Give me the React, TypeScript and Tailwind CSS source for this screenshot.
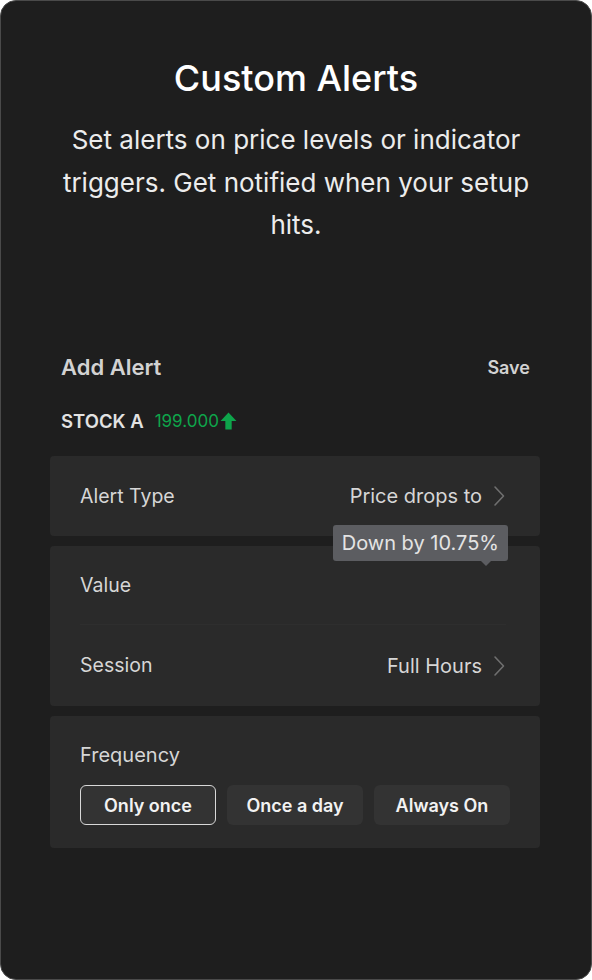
import React from 'react'

const font = { fontFamily: 'Inter, "Noto Sans", sans-serif' }

const Chevron: React.FC = () => (
    <svg width="14" height="22" viewBox="0 0 14 22" fill="none" className="ml-[10px]">
        <path d="M3 2l8.5 9L3 20" stroke="#6f6f6f" strokeWidth="1.6" strokeLinecap="round" strokeLinejoin="round" />
    </svg>
)

const frequencies = ['Only once', 'Once a day', 'Always On']

export default function App() {
    return (
        <div className="bg-white w-[592px] h-[980px]" style={font}>
            <div className="w-[592px] h-[980px] bg-[#1e1e1e] border border-[#4a4a4a] rounded-[16px] overflow-hidden flex flex-col">
                {/* Heading */}
                <div className="pt-[55px] px-[40px] text-center">
                    <h1 className="text-[36px] leading-[44px] font-medium text-white">Custom Alerts</h1>
                    <p className="mt-[19px] text-[26px] leading-[42.5px] text-[#ececec]">
                        Set alerts on price levels or indicator triggers. Get notified when your setup hits.
                    </p>
                </div>

                {/* Add alert form */}
                <div className="mt-[104px] px-[60px] flex justify-between items-center">
                    <span className="text-[22px] font-semibold text-[#d2d2d2]">Add Alert</span>
                    <span className="text-[18px] font-semibold text-[#d2d2d2] mr-[1px]">Save</span>
                </div>
                <div className="mt-[24px] px-[60px] flex items-center">
                    <span className="text-[18.5px] font-semibold text-[#e2e2e2]">STOCK A</span>
                    <span className="ml-[11px] text-[17px] text-[#0ea54b]">199.000</span>
                    <svg width="17" height="18" viewBox="0 0 16 17" className="ml-[1px]">
                        <path d="M8 0.5L15.5 8.5H11V16.5H5V8.5H0.5Z" fill="#0ea54b" />
                    </svg>
                </div>

                <div className="mt-[21px] ml-[49px] mr-[51px] flex flex-col gap-[10px]">
                    <div className="relative h-[80px] bg-[#2a2a2a] rounded-[4px] pl-[30px] pr-[34px] flex items-center justify-between">
                        <span className="text-[19.5px] text-[#d6d6d6]">Alert Type</span>
                        <span className="flex items-center text-[20px] text-[#d6d6d6]">
                            Price drops to
                            <Chevron />
                        </span>
                        <div className="absolute z-10 top-[69px] right-[32px] bg-[#5c5d61] rounded-[3px] h-[36px] px-[9px] flex items-center text-[20px] text-[#e4e4e4]">
                            Down by 10.75%
                            <span className="absolute -bottom-[5px] right-[17px] w-0 h-0 border-l-[5px] border-r-[5px] border-t-[5px] border-l-transparent border-r-transparent border-t-[#5c5d61]" />
                        </div>
                    </div>

                    <div className="bg-[#2a2a2a] rounded-[4px] pl-[30px] pr-[34px]">
                        <div className="h-[79px] flex items-center border-b border-[#2e2e2e]">
                            <span className="text-[19.5px] text-[#d6d6d6]">Value</span>
                        </div>
                        <div className="h-[81px] flex items-center justify-between">
                            <span className="text-[19.5px] text-[#d6d6d6]">Session</span>
                            <span className="flex items-center text-[20px] text-[#d6d6d6]">
                                Full Hours
                                <Chevron />
                            </span>
                        </div>
                    </div>

                    <div className="bg-[#2a2a2a] rounded-[4px] px-[30px] pt-[26px] pb-[23px]">
                        <div className="text-[20px] leading-[26px] text-[#d6d6d6]">Frequency</div>
                        <div className="mt-[17px] flex gap-[11px]">
                            {frequencies.map((f, i) => (
                                <button
                                    key={f}
                                    className={`w-[136px] h-[40px] rounded-[6px] bg-[#333333] text-[18px] font-semibold text-[#f2f2f2] ${i === 0 ? 'border border-[#d8d8d8]' : ''}`}
                                >
                                    {f}
                                </button>
                            ))}
                        </div>
                    </div>
                </div>
            </div>
        </div>
    )
}
